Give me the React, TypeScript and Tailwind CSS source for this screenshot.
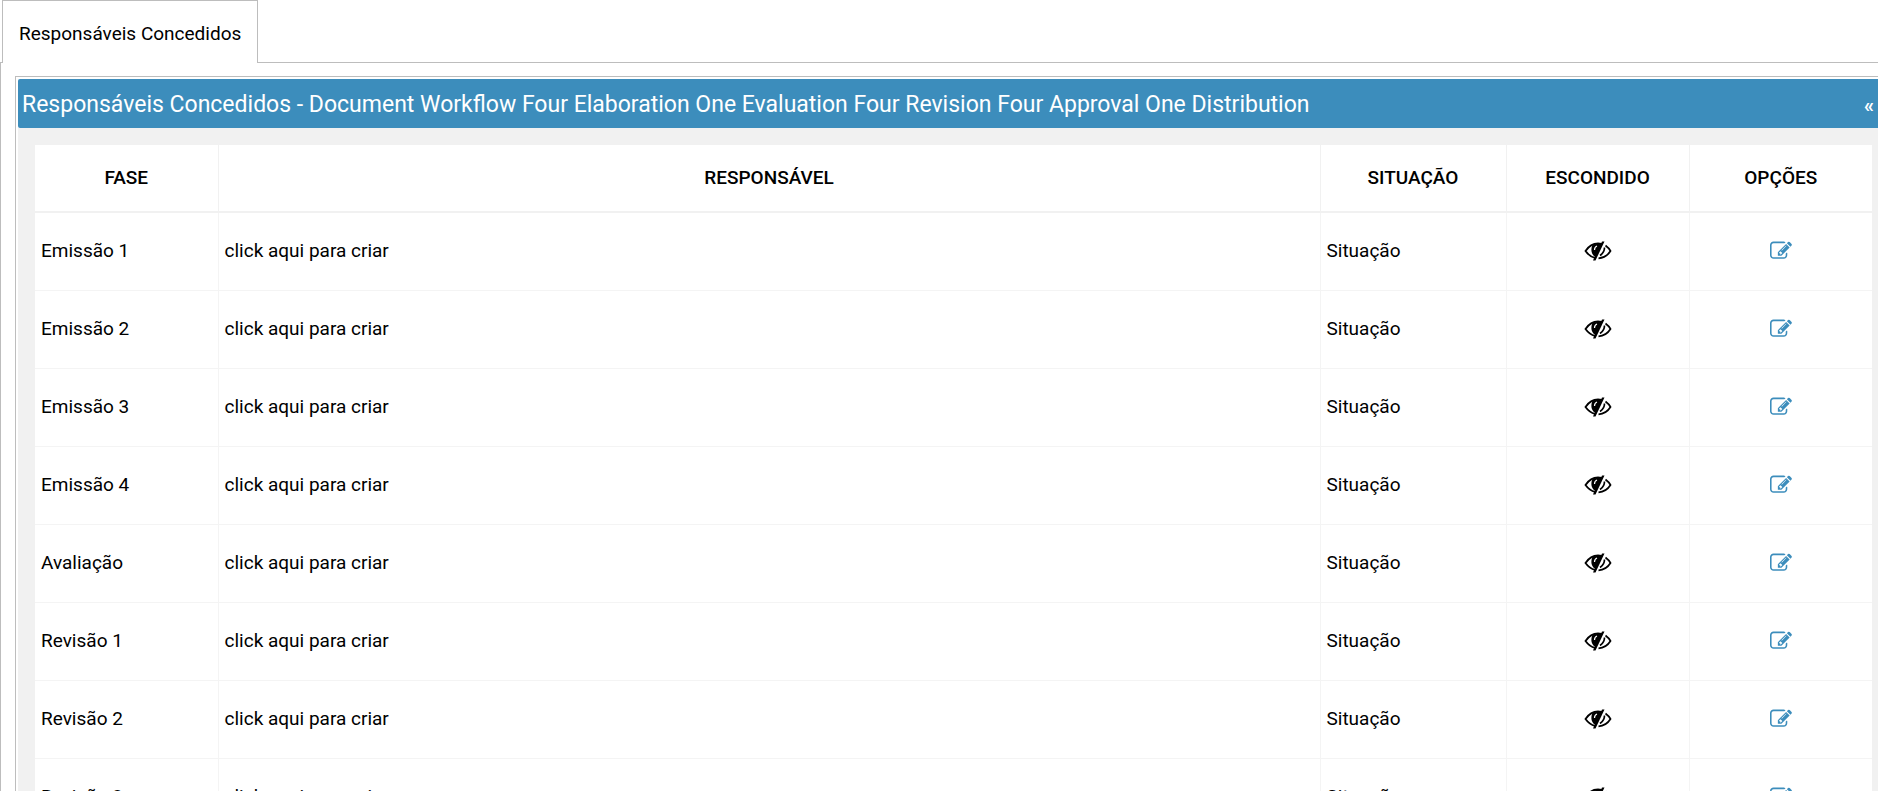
import { useState } from "react";

interface Phase {
  id: number;
  name: string;
  responsible: string;
  status: string;
}

const phases: Phase[] = [
  "Emissão 1",
  "Emissão 2",
  "Emissão 3",
  "Emissão 4",
  "Avaliação",
  "Revisão 1",
  "Revisão 2",
  "Revisão 3",
].map((name, i) => ({
  id: i + 1,
  name,
  responsible: "click aqui para criar",
  status: "Situação",
}));

function EyeCloseIcon() {
  return (
    <svg className="w-7 h-5" viewBox="0 0 28 20" fill="none">
      <path
        d="M11 16.800C7 16 4 13.500 1.500 10C4.500 5.500 9 2.500 14 2.500C15.500 2.500 16.500 2.700 18 3"
        stroke="currentColor"
        strokeWidth={1.800}
      />
      <path
        d="M8.200 4.500C6.500 9 7.500 13.500 10.800 15.500L9 19.500H11.500L20.500 0.500H18L17 3C14 2.500 11 3 8.200 4.500Z"
        fill="currentColor"
      />
      <path d="M10.500 9Q10.500 6 13 5" stroke="white" strokeWidth={1.200} />
      <path
        d="M21.500 4.500C23.500 6 25.500 8 26.500 10C24 14 20 17 14.500 17.300M20.500 6.500C20.500 10 19 12.500 16 14.500"
        stroke="currentColor"
        strokeWidth={1.700}
      />
    </svg>
  );
}

function EditIcon() {
  return (
    <svg
      className="w-[22px] h-[22px]"
      viewBox="0 0 1792 1792"
      fill="currentColor"
    >
      <path d="M888 1184l116-116-152-152-116 116v56h96v96h56zm440-720q-16-16-33 1l-350 350q-17 17-1 33t33-1l350-350q17-17 1-33zm80 594v190q0 119-84.5 203.5t-203.5 84.5h-832q-119 0-203.5-84.5t-84.5-203.5v-832q0-119 84.5-203.5t203.5-84.5h832q63 0 117 25 15 7 18 23 3 17-9 29l-49 49q-14 14-32 8-23-6-45-6h-832q-66 0-113 47t-47 113v832q0 66 47 113t113 47h832q66 0 113-47t47-113v-126q0-13 9-22l64-64q15-15 35-7t20 29zm-96-738l288 288-672 672h-288v-288zm444 132l-92 92-288-288 92-92q28-28 68-28t68 28l152 152q28 28 28 68t-28 68z" />
    </svg>
  );
}

export default function App() {
  const [collapsed, setCollapsed] = useState(false);

  return (
    <div className="h-screen overflow-hidden bg-white font-['Roboto',sans-serif] text-[19px] leading-7 text-black">
      {/* Abas */}
      <div className="flex" role="tablist">
        <div className="w-0.5 border-b border-[#bdbdbd]" />
        <button
          role="tab"
          aria-selected="true"
          className="h-[63px] px-4 pt-1 border border-b-0 border-[#bdbdbd]"
        >
          Responsáveis Concedidos
        </button>
        <div className="flex-1 border-b border-[#bdbdbd]" />
      </div>

      <div className="border-l border-[#bdbdbd] pl-3.5 pt-[13px]">
        <section className="border-l border-t border-[#bdbdbd] pl-0.5 pt-0.5">
          <header className="flex items-center justify-between h-[49px] px-1 pt-0.5 rounded-l-xs bg-[#3c8dbc] text-white">
            <h1 className="text-[23px]">
              Responsáveis Concedidos - Document Workflow Four Elaboration One
              Evaluation Four Revision Four Approval One Distribution
            </h1>
            <button
              aria-label="Recolher"
              onClick={() => setCollapsed(!collapsed)}
              className="text-xl font-bold"
            >
              «
            </button>
          </header>

          {!collapsed && (
            <div className="bg-[#f1f1f1] pl-[17px] pr-1.5 pt-[17px]">
              <table className="w-full table-fixed bg-white">
                <thead>
                  <tr className="h-[67px] border-b-2 border-[#f1f1f1] uppercase">
                    <th className="w-[183px] border-r border-[#f1f1f1] font-medium">
                      Fase
                    </th>
                    <th className="border-r border-[#f1f1f1] font-medium">
                      Responsável
                    </th>
                    <th className="w-[186px] border-r border-[#f1f1f1] font-medium">
                      Situação
                    </th>
                    <th className="w-[183px] border-r border-[#f1f1f1] font-medium">
                      Escondido
                    </th>
                    <th className="w-[183px] font-medium">Opções</th>
                  </tr>
                </thead>
                <tbody>
                  {phases.map((phase) => (
                    <tr
                      key={phase.id}
                      className="h-[78px] border-b border-[#f4f4f4]"
                    >
                      <td className="border-r border-[#f4f4f4] px-1.5">
                        {phase.name}
                      </td>
                      <td className="border-r border-[#f4f4f4] px-1.5">
                        <a href="#">{phase.responsible}</a>
                      </td>
                      <td className="border-r border-[#f4f4f4] px-1.5">
                        {phase.status}
                      </td>
                      <td className="border-r border-[#f4f4f4]">
                        <div className="flex justify-center">
                          <EyeCloseIcon />
                        </div>
                      </td>
                      <td>
                        <div className="flex justify-center">
                          <button
                            aria-label={`Editar ${phase.name}`}
                            className="text-[#3c8dbc]"
                          >
                            <EditIcon />
                          </button>
                        </div>
                      </td>
                    </tr>
                  ))}
                </tbody>
              </table>
            </div>
          )}
        </section>
      </div>
    </div>
  );
}
